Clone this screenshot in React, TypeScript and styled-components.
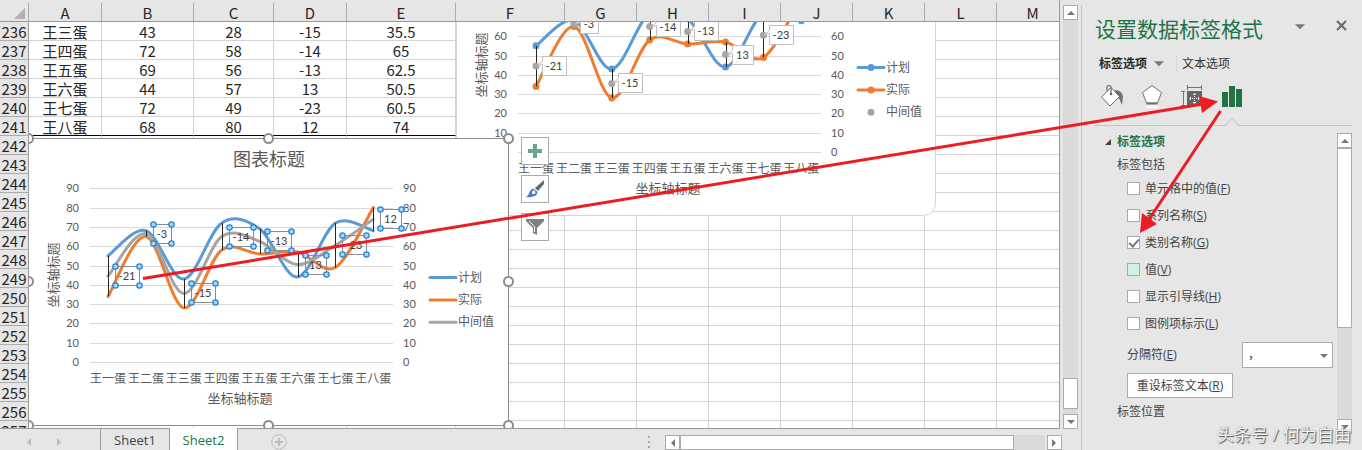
import React, { useState } from "react";
import styled, { createGlobalStyle, css } from "styled-components";

const UI_FONT = `"Open Sans", "Noto Sans CJK SC", sans-serif`;
const CELL_FONT = `"Noto Sans CJK SC", sans-serif`;
const CHART_FONT = `Lato, "Noto Sans CJK SC", sans-serif`;

const GREEN = "#217346";
const CHROME = "#e6e6e6";
const TRACK = "#dadada";
const LINE = "#ababab";
const RED = "#ed1c24";

const GlobalStyle = createGlobalStyle`
  * { box-sizing: border-box; }
  body { margin: 0; background: ${CHROME}; font-family: ${UI_FONT}; }
  button, select, input { font: inherit; color: inherit; margin: 0; }
`;

/* ---------- data ---------- */

const COLUMNS = [
  { name: "A", width: 73 },
  { name: "B", width: 92 },
  { name: "C", width: 80 },
  { name: "D", width: 73 },
  { name: "E", width: 109 },
  { name: "F", width: 109 },
  { name: "G", width: 72 },
  { name: "H", width: 72 },
  { name: "I", width: 72 },
  { name: "J", width: 72 },
  { name: "K", width: 72 },
  { name: "L", width: 72 },
  { name: "M", width: 72 },
];

const CELLS: Record<number, string[]> = {
  236: ["王三蛋", "43", "28", "-15", "35.5"],
  237: ["王四蛋", "72", "58", "-14", "65"],
  238: ["王五蛋", "69", "56", "-13", "62.5"],
  239: ["王六蛋", "44", "57", "13", "50.5"],
  240: ["王七蛋", "72", "49", "-23", "60.5"],
  241: ["王八蛋", "68", "80", "12", "74"],
};
const FIRST_ROW = 236;
const LAST_DATA_ROW = 241;
const ROW_COUNT = 22;

const NAMES = ["王一蛋", "王二蛋", "王三蛋", "王四蛋", "王五蛋", "王六蛋", "王七蛋", "王八蛋"];
const PLAN = [55, 68, 43, 72, 69, 44, 72, 68];
const ACTUAL = [34, 65, 28, 58, 56, 57, 49, 80];
const MIDDLE = [44.5, 66.5, 35.5, 65, 62.5, 50.5, 60.5, 74];
const DIFFS = ["-21", "-3", "-15", "-14", "-13", "13", "-23", "12"];

const BLUE = "#5b9bd5";
const ORANGE = "#ed7d31";
const GRAY = "#a5a5a5";

/* ---------- frame ---------- */

const Shell = styled.div`
  position: relative;
  display: flex;
  height: 100vh;
  overflow: hidden;
  background: ${CHROME};
`;

const Workbook = styled.main`
  flex: 1;
  min-width: 0;
  display: flex;
  flex-direction: column;
`;

const SheetRow = styled.div`
  flex: 1;
  min-height: 0;
  display: flex;
`;

const Sheet = styled.div`
  position: relative;
  flex: 1;
  min-width: 0;
  padding-top: 3px;
  overflow: hidden;
  border-right: 1px solid #999;
  border-bottom: 1px solid #999;
`;

const Grid = styled.table`
  table-layout: fixed;
  width: 1069px;
  border-spacing: 0;
  background: #fff;
  font: 15px/16px ${CELL_FONT};
  color: #262626;
`;

const HeadCell = styled.th`
  height: 19px;
  padding: 2px 0 0;
  background: ${CHROME};
  border-right: 1px solid ${LINE};
  border-bottom: 1px solid #999;
  font-weight: 400;
  text-align: center;
`;

const CornerCell = styled(HeadCell)`
  text-align: right;
  padding-right: 3px;
  line-height: 0;
`;

const RowHead = styled.th`
  height: 19px;
  padding: 2px 0 0;
  background: ${CHROME};
  border-right: 1px solid #999;
  border-bottom: 1px solid ${LINE};
  font-weight: 400;
  text-align: center;
  white-space: nowrap;
`;

const Cell = styled.td<{ $closing?: boolean }>`
  height: 19px;
  padding: 2px 0 0;
  border-right: 1px solid #d4d4d4;
  border-bottom: 1px solid ${(p) => (p.$closing ? "#000" : "#d4d4d4")};
  text-align: center;
`;

/* Drawing objects float over the cells. */
const ObjectLayer = styled.div`
  position: absolute;
  inset: 22px 0 0 29px;
  overflow: hidden;
`;

const ChartObject = styled.svg<{ $left: number; $top: number }>`
  position: absolute;
  left: ${(p) => p.$left}px;
  top: ${(p) => p.$top}px;
  overflow: visible;
  font-family: ${CHART_FONT};
  font-size: 12px;
`;

const ChartTools = styled.div`
  position: absolute;
  left: 492px;
  top: 115px;
  display: flex;
  flex-direction: column;
  gap: 10px;
`;

const ToolButton = styled.button`
  width: 28px;
  height: 28px;
  padding: 0;
  display: grid;
  place-items: center;
  background: #fff;
  border: 1px solid ${LINE};
`;

/* ---------- scroll bars ---------- */

const VerticalBar = styled.div`
  display: flex;
  flex-direction: column;
  width: 15px;
  background: ${TRACK};
`;

const SheetScroll = styled(VerticalBar)`
  margin: 5px 3px 0 3px;
`;

const ArrowButton = styled.button`
  flex: none;
  width: 15px;
  height: 15px;
  padding: 0;
  display: grid;
  place-items: center;
  background: #fff;
  border: 1px solid ${LINE};
  color: #777;
`;

const SheetThumb = styled.div`
  height: 31px;
  margin-top: auto;
  margin-bottom: 5px;
  background: #fff;
  border: 1px solid ${LINE};
`;

const PaneThumb = styled.div`
  height: 180px;
  margin-bottom: auto;
  background: #fff;
  border: 1px solid ${LINE};
`;

/* ---------- sheet tabs ---------- */

const TabBar = styled.footer`
  flex: none;
  display: flex;
  height: 21px;
  font-size: 13px;
  line-height: 20px;
`;

const TabNav = styled.div`
  display: flex;
  align-items: center;
  justify-content: space-between;
  width: 100px;
  padding: 4px 38px 0 26px;
`;

const NavButton = styled.button`
  padding: 0;
  border: 0;
  background: none;
  line-height: 0;
  color: #b9b9b9;
`;

const SheetTab = styled.button<{ $active?: boolean }>`
  width: 69px;
  padding: 0;
  border: 0;
  border-left: 1px solid #999;
  background: transparent;
  color: #444;
  ${(p) =>
    p.$active &&
    css`
      position: relative;
      margin-top: -1px;
      padding-top: 1px;
      border-right: 1px solid #999;
      background: #fff;
      color: ${GREEN};
    `}
`;

const AddSheet = styled(NavButton)`
  margin-left: 33px;
  padding-top: 5px;
`;

const BarGrip = styled.div`
  display: grid;
  align-content: center;
  gap: 3px;
  margin-left: auto;
  margin-right: 15px;
  padding-top: 4px;
`;

const GripDot = styled.span`
  width: 2px;
  height: 2px;
  background: ${LINE};
`;

const HorizontalScroll = styled.div`
  display: flex;
  width: 397px;
  height: 15px;
  margin: 6px 19px 0 0;
`;

const HorizontalTrack = styled.div`
  flex: 1;
  margin-right: 2px;
  background: ${TRACK};
`;

const HorizontalThumb = styled.div`
  width: 334px;
  height: 15px;
  background: #fff;
  border: 1px solid ${LINE};
`;

/* ---------- format pane ---------- */

const Pane = styled.aside`
  position: relative;
  flex: none;
  width: 281px;
  margin-top: 5px;
  padding: 0 10px 0 13px;
  display: flex;
  flex-direction: column;
  border-left: 1px solid #c3c3c3;
  color: #444;
  font-size: 12px;
  line-height: 18px;
`;

const PaneHeader = styled.header`
  display: flex;
  align-items: flex-start;
  padding-top: 8px;
`;

const PaneTitle = styled.h1`
  margin: 0;
  flex: 1;
  color: ${GREEN};
  font-size: 21px;
  line-height: 32px;
  font-weight: 400;
`;

const PlainButton = styled.button`
  padding: 0;
  border: 0;
  background: none;
  line-height: 0;
  color: #777;
`;

const MenuButton = styled(PlainButton)`
  padding-top: 10px;
  margin-right: 31px;
`;

const CloseButton = styled(PlainButton)`
  padding-top: 7px;
  margin-right: 5px;
`;

const OptionTabs = styled.div`
  display: flex;
  align-items: center;
  padding: 10px 0 0 4px;
  height: 28px;
`;

const OptionTab = styled.button<{ $active?: boolean }>`
  display: flex;
  align-items: center;
  gap: 7px;
  padding: 0;
  border: 0;
  background: none;
  color: ${(p) => (p.$active ? "#262626" : "#333")};
  font-weight: ${(p) => (p.$active ? 700 : 400)};
  line-height: 16px;
  & svg {
    color: #777;
  }
  & + & {
    margin-left: 12px;
    padding-left: 5px;
    border-left: 1px solid #d8d8d8;
  }
`;

const IconTabs = styled.div`
  display: flex;
  gap: 16px;
  padding: 11px 0 0 5px;
`;

const Notch = styled.svg`
  display: block;
  width: 100%;
  height: 10px;
  margin-top: 9px;
`;

const PaneBody = styled.div`
  display: flex;
  flex: 1;
  min-height: 0;
  padding-top: 6px;
`;

const PaneContent = styled.div`
  flex: 1;
  padding-left: 10px;
`;

const SectionHead = styled.h2`
  display: flex;
  align-items: center;
  gap: 6px;
  margin: 0;
  color: ${GREEN};
  font-size: 12px;
  line-height: 18px;
`;

const SubHead = styled.h3`
  margin: 5px 0 0 12px;
  font-size: 12px;
  line-height: 18px;
  font-weight: 400;
`;

const Choices = styled.div`
  margin: 1px 0 9px 22px;
`;

const Choice = styled.label`
  display: flex;
  align-items: center;
  gap: 5px;
  height: 27px;
`;

const Tick = styled.input<{ $hot?: boolean }>`
  appearance: none;
  width: 13px;
  height: 13px;
  border: 1px solid ${(p) => (p.$hot ? "#86bfa0" : LINE)};
  background: ${(p) => (p.$hot ? "#d3f0e0" : "#fff")};
  display: grid;
  place-items: center;
  &:checked::after {
    content: "";
    width: 4px;
    height: 8px;
    margin-top: -2px;
    border: solid #777;
    border-width: 0 2px 2px 0;
    transform: rotate(42deg);
  }
`;

const SeparatorRow = styled.div`
  display: flex;
  align-items: center;
  justify-content: space-between;
  margin: -4px 4px 5px 22px;
`;

const SelectBox = styled.div`
  position: relative;
  width: 91px;
  height: 26px;
`;

const Select = styled.select`
  appearance: none;
  width: 100%;
  height: 100%;
  padding: 0 20px 0 5px;
  border: 1px solid ${LINE};
  border-radius: 0;
  background: #fff;
`;

const SelectCaret = styled.svg`
  position: absolute;
  right: 5px;
  top: 11px;
  pointer-events: none;
`;

const ResetButton = styled.button`
  display: block;
  width: 106px;
  height: 25px;
  margin: 0 0 0 22px;
  padding: 0;
  border: 1px solid ${LINE};
  background: #fdfdfd;
`;

const PaneScroll = styled(VerticalBar)`
  margin-bottom: 16px;
`;

const Watermark = styled.div`
  position: absolute;
  right: 11px;
  bottom: 3px;
  color: #f4f4f4;
  font-size: 17px;
  line-height: 24px;
  white-space: nowrap;
  text-shadow: 1px 1px 1px #555, 0 0 1px #777;
`;

const Annotations = styled.svg`
  position: absolute;
  right: 0;
  top: 0;
  pointer-events: none;
`;

/* ---------- small drawings ---------- */

const ARROWS = {
  up: "M0 5 L4 1 L8 5 Z",
  down: "M0 1 L4 5 L8 1 Z",
};

function Caret({ dir, size = 8 }: { dir: "up" | "down"; size?: number }) {
  return (
    <svg width={size} height={size * 0.75} viewBox="0 0 8 6">
      <path d={ARROWS[dir]} fill="currentColor" />
    </svg>
  );
}

function SideCaret({ dir }: { dir: "left" | "right" }) {
  return (
    <svg width="5" height="8" viewBox="0 0 5 8">
      <path d={dir === "left" ? "M5 0 L1 4 L5 8 Z" : "M0 0 L4 4 L0 8 Z"} fill="currentColor" />
    </svg>
  );
}

/* ---------- chart ---------- */

const px = (i: number) => 80 + i * 37.9;
const py = (v: number) => 224 - v * 1.93;

function smooth(values: number[]) {
  const at = (i: number) => {
    const k = Math.max(0, Math.min(values.length - 1, i));
    return [px(k), py(values[k])];
  };
  let d = `M${at(0).join(" ")}`;
  for (let i = 0; i < values.length - 1; i++) {
    const [a, b, c, e] = [at(i - 1), at(i), at(i + 1), at(i + 2)];
    d += ` C${b[0] + (c[0] - a[0]) / 6} ${b[1] + (c[1] - a[1]) / 6} ${c[0] - (e[0] - b[0]) / 6} ${
      c[1] - (e[1] - b[1]) / 6
    } ${c[0]} ${c[1]}`;
  }
  return d;
}

const labelWidth = (t: string) => (t.length === 3 ? 24 : t === "-3" ? 18 : 21);

interface ChartProps {
  left: number;
  top: number;
  selected?: boolean;
  topTick: number;
  leftFrom: number;
  labelCount: number;
}

function Chart({ left, top, selected, topTick, leftFrom, labelCount }: ChartProps) {
  const ticks = Array.from({ length: topTick / 10 + 1 }, (_, i) => i * 10);
  const legend = [
    { name: "计划", color: BLUE, line: true },
    { name: "实际", color: ORANGE, line: true },
    { name: "中间值", color: GRAY, line: !!selected },
  ];
  return (
    <ChartObject $left={left} $top={top} width="481" height="288" role="img" aria-label="图表">
      {selected ? (
        <rect x="0.5" y="0.5" width="480" height="287" fill="#fff" stroke="#8c8c8c" />
      ) : (
        <rect x="0.5" y="0.5" width="479" height="287" rx="12" fill="#fff" stroke="#d4d4d4" />
      )}
      {selected && (
        <text x="241" y="28" fontSize="18" textAnchor="middle" fill="#595959">
          图表标题
        </text>
      )}
      {ticks.map((t) => (
        <React.Fragment key={t}>
          <line x1="62" x2="365" y1={Math.round(py(t)) + 0.5} y2={Math.round(py(t)) + 0.5} stroke="#d9d9d9" />
          {t >= leftFrom && (
            <text x="51" y={py(t) + 4} fontSize="11" textAnchor="end" fill="#595959">
              {t}
            </text>
          )}
          <text x="375" y={py(t) + 4} fontSize="11" fill="#595959">
            {t}
          </text>
        </React.Fragment>
      ))}
      {NAMES.map((n, i) => (
        <text key={n} x={px(i)} y="245" textAnchor="middle" fill="#595959">
          {n}
        </text>
      ))}
      <text x="212" y="265" fontSize="13" textAnchor="middle" fill="#595959">
        坐标轴标题
      </text>
      <text x="0" y="0" fontSize="13" textAnchor="middle" fill="#595959" transform="translate(30 137) rotate(-90)">
        坐标轴标题
      </text>

      <path d={smooth(PLAN)} fill="none" stroke={BLUE} strokeWidth="3" strokeLinecap="round" />
      <path d={smooth(ACTUAL)} fill="none" stroke={ORANGE} strokeWidth="3" strokeLinecap="round" />
      {selected && <path d={smooth(MIDDLE)} fill="none" stroke={GRAY} strokeWidth="3" strokeLinecap="round" />}
      {!selected &&
        NAMES.map((n, i) => (
          <g key={n}>
            <circle cx={px(i)} cy={py(PLAN[i])} r="3.5" fill={BLUE} />
            <circle cx={px(i)} cy={py(ACTUAL[i])} r="3.5" fill={ORANGE} />
          </g>
        ))}
      {NAMES.map((n, i) => (
        <line
          key={n}
          x1={Math.round(px(i)) + 0.5}
          x2={Math.round(px(i)) + 0.5}
          y1={py(PLAN[i])}
          y2={py(ACTUAL[i])}
          stroke="#262626"
        />
      ))}
      {!selected && MIDDLE.map((v, i) => <circle key={i} cx={px(i)} cy={py(v)} r="3.5" fill={GRAY} />)}

      {DIFFS.slice(0, labelCount).map((t, i) => {
        const w = labelWidth(t);
        const x = Math.round(px(i)) + (selected ? 7 : 6);
        const y = Math.round(py(MIDDLE[i])) - (selected ? 10 : 9);
        const corners = [
          [x, y],
          [x + w, y],
          [x, y + 19],
          [x + w, y + 19],
        ];
        return (
          <g key={i}>
            {selected ? (
              <rect x={x + 0.5} y={y + 0.5} width={w} height="19" fill="none" stroke="#8c8c8c" />
            ) : (
              <path
                d={`M${x + 0.5} ${y + 4.5} V${y - 0.5} h${w} v19 h${-w} V${y + 7.5} L${x - 5} ${y + 9} Z`}
                fill="#fff"
                stroke="#bfbfbf"
              />
            )}
            <text x={x + w / 2} y={y + (selected ? 14 : 13)} fontSize="11" textAnchor="middle" fill="#404040">
              {t}
            </text>
            {selected &&
              corners.map(([cx, cy], k) => (
                <circle key={k} cx={cx + 0.5} cy={cy + 0.5} r="2.7" fill="#a9d3f5" stroke="#1a83d8" strokeWidth="1.2" />
              ))}
          </g>
        );
      })}

      {legend.map((l, i) => {
        const y = 139.5 + i * 22.4;
        return (
          <g key={l.name}>
            {l.line && (
              <line x1="402" x2="428" y1={y} y2={y} stroke={l.color} strokeWidth="3" strokeLinecap="round" />
            )}
            {!selected && <circle cx="415" cy={y} r="3.5" fill={l.color} />}
            <text x="430" y={y + 4} fill="#595959">
              {l.name}
            </text>
          </g>
        );
      })}

      {selected &&
        [0, 240, 480].flatMap((x) =>
          [0, 143, 287]
            .filter((y) => !(x === 240 && y === 143))
            .map((y) => (
              <circle key={`${x}-${y}`} cx={x + 0.5} cy={y + 0.5} r="4.5" fill="#fff" stroke="#8c8c8c" strokeWidth="2" />
            ))
        )}
    </ChartObject>
  );
}

/* ---------- pane icons ---------- */

const BucketIcon = () => (
  <svg width="24" height="24" viewBox="0 0 24 24">
    <path d="M15 6 C20 6 23 9 23 14 L22 21 C20 17 20 14 16 12 Z" fill="#737373" />
    <path d="M1.5 13 L11 3.5 L19.5 12.5 L10 22 Z" fill="#fff" stroke="#6a6a6a" />
    <path d="M7 7 V3.5 Q7 1.5 9 1.5 Q11 1.5 11 3.5 V10" fill="none" stroke="#6a6a6a" strokeWidth="1.2" />
    <circle cx="11" cy="10" r="1.3" fill="#6a6a6a" />
  </svg>
);

const PentagonIcon = () => (
  <svg width="24" height="24" viewBox="0 0 24 24">
    <path d="M12 1.5 L21.5 8.5 L17.5 19 H6.5 L2.5 8.5 Z" fill="#fff" stroke="#737373" />
    <path d="M6.5 19.5 H17.5" stroke="#737373" strokeWidth="2" />
    <path d="M6.5 21.5 H17.5 L18.5 24 H5.5 Z" fill="#f8f8f8" />
  </svg>
);

const SizeIcon = () => (
  <svg width="24" height="24" viewBox="0 0 24 24">
    <path d="M7.5 1 V6 M21.5 1 V6 M7.5 3.5 H21.5 M1 7.5 H5 M1 21.5 H5 M3.5 7.5 V21.5" fill="none" stroke="#737373" />
    <rect x="7" y="7" width="15" height="15" fill="#666" />
    <path
      d="M14.5 9 L12.8 11 H16.2 Z M14.5 20 L12.8 18 H16.2 Z M9 14.5 L11 12.8 V16.2 Z M20 14.5 L18 12.8 V16.2 Z M14 12 h1 v1 h-1 Z M14 14 h1 v1 h-1 Z M14 16 h1 v1 h-1 Z M12 14 h1 v1 h-1 Z M16 14 h1 v1 h-1 Z"
      fill="#fff"
    />
  </svg>
);

const BarsIcon = () => (
  <svg width="24" height="24" viewBox="0 0 24 24">
    <path d="M2 8 h6 v15 h-6 Z M9 2 h6 v21 h-6 Z M16 5 h6 v18 h-6 Z" fill={GREEN} />
  </svg>
);

const CHOICES = [
  { text: "单元格中的值", key: "F" },
  { text: "系列名称", key: "S" },
  { text: "类别名称", key: "G" },
  { text: "值", key: "V", hot: true },
  { text: "显示引导线", key: "H" },
  { text: "图例项标示", key: "L" },
];

export default function App() {
  const [checked, setChecked] = useState<Record<string, boolean>>({ G: true });
  const rows = Array.from({ length: ROW_COUNT }, (_, i) => FIRST_ROW + i);

  return (
    <Shell>
      <GlobalStyle />
      <Workbook>
        <SheetRow>
          <Sheet>
            <Grid>
              <colgroup>
                <col width="29" />
                {COLUMNS.map((c) => (
                  <col key={c.name} width={c.width} />
                ))}
              </colgroup>
              <thead>
                <tr>
                  <CornerCell>
                    <svg width="11" height="11" viewBox="0 0 11 11">
                      <path d="M11 0 V11 H0 Z" fill="#b1b1b1" />
                    </svg>
                  </CornerCell>
                  {COLUMNS.map((c) => (
                    <HeadCell key={c.name} scope="col">
                      {c.name}
                    </HeadCell>
                  ))}
                </tr>
              </thead>
              <tbody>
                {rows.map((r) => (
                  <tr key={r}>
                    <RowHead scope="row">{r}</RowHead>
                    {COLUMNS.map((c, i) => (
                      <Cell key={c.name} $closing={r === LAST_DATA_ROW && i < 5}>
                        {CELLS[r]?.[i]}
                      </Cell>
                    ))}
                  </tr>
                ))}
              </tbody>
            </Grid>
            <ObjectLayer>
              <Chart left={427} top={-94} topTick={60} leftFrom={10} labelCount={7} />
              <Chart left={-1} top={116} selected topTick={90} leftFrom={0} labelCount={8} />
              <ChartTools>
                <ToolButton aria-label="图表元素">
                  <svg width="14" height="14" viewBox="0 0 14 14">
                    <path d="M5 0 h4 v5 h5 v4 h-5 v5 h-4 v-5 h-5 v-4 h5 Z" fill="#6aa791" />
                  </svg>
                </ToolButton>
                <ToolButton aria-label="图表样式">
                  <svg width="20" height="20" viewBox="0 0 20 20">
                    <path d="M19 1 V5 L13 12 L10 9 Z" fill="#6a6a6a" />
                    <path d="M8.5 9.5 L12.5 13 Q12 17 8 17.5 Q5 18.5 1 18 Q4 16.5 4.5 13 Q5.5 10 8.5 9.5 Z" fill="#4a7ebb" />
                    <path d="M8.5 11 Q10.500 12 10.5 14 Q9 16 7 14.5 Q6.5 12.5 8.5 11 Z" fill="#fff" />
                  </svg>
                </ToolButton>
                <ToolButton aria-label="图表筛选器">
                  <svg width="18" height="18" viewBox="0 0 18 18">
                    <path d="M0 1 H18 V3 L11 10 V17 L7 15 V10 L0 3 Z" fill="#7f7f7f" />
                    <path d="M3 3 L8.5 8.5 V14" fill="none" stroke="#fff" />
                  </svg>
                </ToolButton>
              </ChartTools>
            </ObjectLayer>
          </Sheet>
          <SheetScroll>
            <ArrowButton aria-label="向上滚动">
              <Caret dir="up" />
            </ArrowButton>
            <SheetThumb />
            <ArrowButton aria-label="向下滚动">
              <Caret dir="down" />
            </ArrowButton>
          </SheetScroll>
        </SheetRow>

        <TabBar>
          <TabNav>
            <NavButton aria-label="上一个工作表">
              <SideCaret dir="left" />
            </NavButton>
            <NavButton aria-label="下一个工作表">
              <SideCaret dir="right" />
            </NavButton>
          </TabNav>
          <SheetTab>Sheet1</SheetTab>
          <SheetTab $active>Sheet2</SheetTab>
          <AddSheet aria-label="新工作表">
            <svg width="16" height="16" viewBox="0 0 16 16">
              <circle cx="8" cy="8" r="7.3" fill="none" stroke="#bdbdbd" />
              <path d="M8 4 V12 M4 8 H12" stroke="#bdbdbd" strokeWidth="2" />
            </svg>
          </AddSheet>
          <BarGrip>
            <GripDot />
            <GripDot />
            <GripDot />
          </BarGrip>
          <HorizontalScroll>
            <ArrowButton aria-label="向左滚动">
              <SideCaret dir="left" />
            </ArrowButton>
            <HorizontalTrack>
              <HorizontalThumb />
            </HorizontalTrack>
            <ArrowButton aria-label="向右滚动">
              <SideCaret dir="right" />
            </ArrowButton>
          </HorizontalScroll>
        </TabBar>
      </Workbook>

      <Pane>
        <PaneHeader>
          <PaneTitle>设置数据标签格式</PaneTitle>
          <MenuButton aria-label="任务窗格选项">
            <Caret dir="down" size={10} />
          </MenuButton>
          <CloseButton aria-label="关闭">
            <svg width="11" height="11" viewBox="0 0 11 11">
              <path d="M1 1 L10 10 M10 1 L1 10" stroke="#6a6a6a" strokeWidth="2.2" />
            </svg>
          </CloseButton>
        </PaneHeader>
        <OptionTabs>
          <OptionTab $active>
            标签选项
            <Caret dir="down" size={10} />
          </OptionTab>
          <OptionTab>文本选项</OptionTab>
        </OptionTabs>
        <IconTabs>
          <PlainButton aria-label="填充与线条">
            <BucketIcon />
          </PlainButton>
          <PlainButton aria-label="效果">
            <PentagonIcon />
          </PlainButton>
          <PlainButton aria-label="大小与属性">
            <SizeIcon />
          </PlainButton>
          <PlainButton aria-label="标签选项">
            <BarsIcon />
          </PlainButton>
        </IconTabs>
        <Notch viewBox="0 0 257 10" preserveAspectRatio="xMinYMin meet">
          <path d="M0 8.5 H130.5 L137 1.5 L143.5 8.5 H257" fill="none" stroke="#c3c3c3" />
        </Notch>
        <PaneBody>
          <PaneContent>
            <SectionHead>
              <svg width="6" height="6" viewBox="0 0 6 6">
                <path d="M6 0 V6 H0 Z" fill="#444" />
              </svg>
              标签选项
            </SectionHead>
            <SubHead>标签包括</SubHead>
            <Choices>
              {CHOICES.map((c) => (
                <Choice key={c.key}>
                  <Tick
                    type="checkbox"
                    $hot={c.hot}
                    checked={!!checked[c.key]}
                    onChange={(e) => setChecked({ ...checked, [c.key]: e.target.checked })}
                  />
                  <span>
                    {c.text}(<u>{c.key}</u>)
                  </span>
                </Choice>
              ))}
            </Choices>
            <SeparatorRow>
              <label htmlFor="separator">
                分隔符(<u>E</u>)
              </label>
              <SelectBox>
                <Select id="separator">
                  <option>，</option>
                </Select>
                <SelectCaret width="8" height="6" viewBox="0 0 8 6">
                  <path d={ARROWS.down} fill="#777" />
                </SelectCaret>
              </SelectBox>
            </SeparatorRow>
            <ResetButton>
              重设标签文本(<u>R</u>)
            </ResetButton>
            <SubHead>标签位置</SubHead>
          </PaneContent>
          <PaneScroll>
            <ArrowButton aria-label="向上滚动">
              <Caret dir="up" />
            </ArrowButton>
            <PaneThumb />
            <ArrowButton aria-label="向下滚动">
              <Caret dir="down" />
            </ArrowButton>
          </PaneScroll>
        </PaneBody>
        <Watermark>头条号 / 何为自由</Watermark>
      </Pane>

      <Annotations width="1362" height="450" viewBox="0 0 1362 450" aria-hidden="true">
        <path d="M143 278.5 L1203 104" stroke={RED} strokeWidth="3" />
        <path d="M1218 101.5 L1199 96 L1202 113 Z" fill={RED} />
        <path d="M1220.5 111 L1148 221" stroke={RED} strokeWidth="3" />
        <path d="M1140 233 L1142 213 L1157 224 Z" fill={RED} />
      </Annotations>
    </Shell>
  );
}
